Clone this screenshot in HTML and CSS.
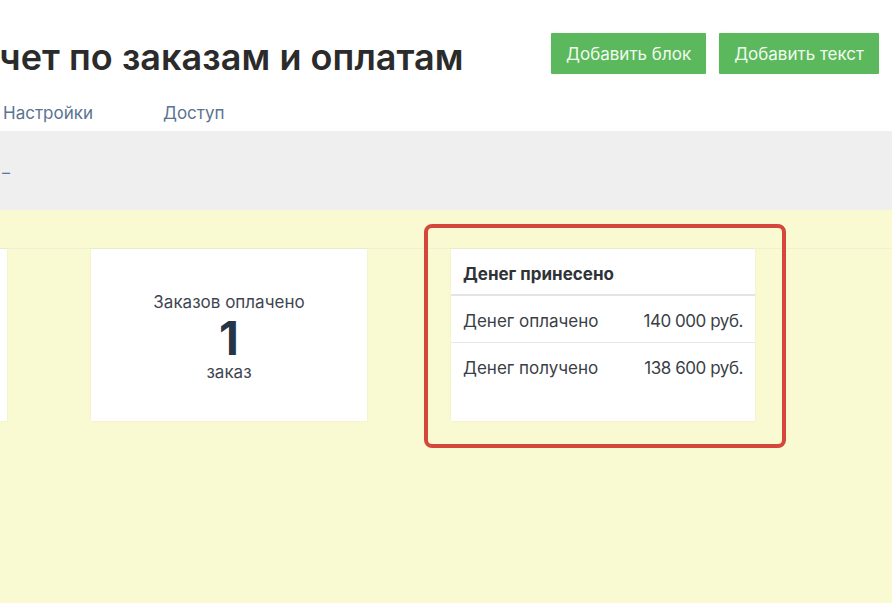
FILE: index.html
```html
<!DOCTYPE html>
<html lang="ru">
<head>
    <meta charset="UTF-8">
    <meta name="viewport" content="width=device-width, initial-scale=1.0">
    <title>Отчет по заказам и оплатам</title>
    <link rel="stylesheet" href="styles.css">
</head>
<body>
    <div class="header">
        <h1>Отчет по заказам и оплатам</h1>
        <div class="header-actions">
            <button type="button" class="btn-green">Добавить блок</button>
            <button type="button" class="btn-green">Добавить текст</button>
        </div>
    </div>

    <div class="tabs">
        <a href="#" class="tab">Настройки</a>
        <a href="#" class="tab">Доступ</a>
    </div>

    <div class="filter-bar">
        <a href="#" class="filter-link">–</a>
    </div>

    <div class="report-area">
        <div class="cards-row">
            <div class="card card-counter"></div>

            <div class="card card-counter">
                <div class="counter-label">Заказов оплачено</div>
                <div class="counter-value">1</div>
                <div class="counter-unit">заказ</div>
            </div>

            <div class="card card-table highlighted">
                <div class="table-head">Денег принесено</div>
                <div class="table-row">
                    <span>Денег оплачено</span>
                    <span class="money">140 000 руб.</span>
                </div>
                <div class="table-row">
                    <span>Денег получено</span>
                    <span class="money">138 600 руб.</span>
                </div>
            </div>
        </div>
    </div>
</body>
</html>
```

FILE: styles.css
```css
body {
    font-family: Inter, "Noto Sans", Arial, sans-serif;
    margin: 0;
    padding: 0;
    background-color: #fafad2;
    color: #333;
}

.header {
    display: flex;
    justify-content: space-between;
    align-items: center;
    padding: 33px 13px 0 0;
    background-color: #fff;
}

.header h1 {
    margin: 0 0 0 -46px;
    padding-top: 8px;
    font-size: 36px;
    line-height: 33px;
    font-weight: 600;
    color: #2b2b2b;
    letter-spacing: 0.05px;
    white-space: nowrap;
}

.header-actions {
    display: flex;
    gap: 13px;
}

.btn-green {
    height: 41px;
    padding: 0 15px;
    font-family: inherit;
    font-size: 17px;
    color: #f0fbef;
    background-color: #5cb85c;
    border: none;
    border-radius: 1px;
    box-shadow: 0 0 3px rgba(0, 0, 0, 0.06);
    cursor: pointer;
}

.btn-green:hover {
    background-color: #4cae4c;
}

.tabs {
    display: flex;
    gap: 70px;
    padding: 27px 0 6px 3px;
    background-color: #fff;
}

.tab {
    font-size: 17px;
    line-height: 24px;
    color: #5a7391;
    text-decoration: none;
}

.filter-bar {
    height: 79px;
    display: flex;
    align-items: center;
    padding-left: 2px;
    background-color: #efeff0;
}

.filter-link {
    font-size: 16px;
    line-height: 24px;
    margin-top: 3px;
    color: #5a7ba0;
    text-decoration: none;
}

.report-area {
    padding: 38px 0 60px;
}

.cards-row {
    display: flex;
    gap: 84px;
    margin-left: -269px;
    border-top: 1px solid #f1f1cf;
}

.card {
    height: 172px;
    background-color: #fff;
    box-shadow: 0 0 2px rgba(0, 0, 0, 0.08);
}

.card-counter {
    width: 276px;
    box-sizing: border-box;
    padding-top: 4px;
    display: flex;
    flex-direction: column;
    align-items: center;
    justify-content: center;
    color: #3f4651;
}

.counter-label,
.counter-unit {
    font-size: 17px;
    line-height: 21px;
}

.counter-value {
    font-size: 46px;
    font-weight: 700;
    line-height: 48px;
    margin-top: 1px;
    color: #253447;
}

.card-table {
    width: 304px;
    color: #3a3f47;
}

.table-head {
    height: 47px;
    box-sizing: border-box;
    display: flex;
    align-items: center;
    padding: 4px 12px 0;
    font-size: 17px;
    font-weight: 700;
    color: #2f3338;
    border-bottom: 2px solid #e4e4e4;
}

.table-row {
    height: 47px;
    box-sizing: border-box;
    display: flex;
    justify-content: space-between;
    align-items: center;
    padding: 3px 12px 0;
    font-size: 17px;
    border-bottom: 1px solid #e8e8e8;
}

.table-row:last-child {
    border-bottom: none;
}

.money {
    letter-spacing: -0.45px;
}

/* red annotation frame around the block */
.highlighted {
    position: relative;
}

.highlighted::after {
    content: "";
    position: absolute;
    top: -25px;
    left: -27px;
    right: -31px;
    bottom: -27px;
    border: 4px solid #d5473b;
    border-radius: 8px;
    pointer-events: none;
}
```
